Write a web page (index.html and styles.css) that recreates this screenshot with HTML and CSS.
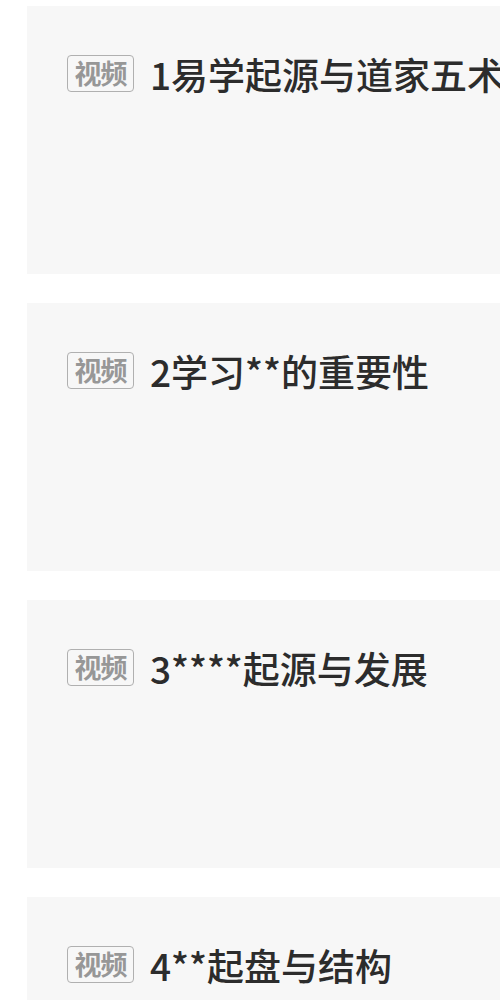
FILE: index.html
```html
<!DOCTYPE html>
<html lang="zh-CN">
<head>
<meta charset="utf-8">
<title>课程列表</title>
<link rel="stylesheet" href="styles.css">
</head>
<body>
<div class="list">
  <div class="card">
    <div class="head"><span class="badge">视频</span><span class="title">1易学起源与道家五术</span></div>
  </div>
  <div class="card">
    <div class="head"><span class="badge">视频</span><span class="title">2学习**的重要性</span></div>
  </div>
  <div class="card">
    <div class="head"><span class="badge">视频</span><span class="title">3****起源与发展</span></div>
  </div>
  <div class="card">
    <div class="head"><span class="badge">视频</span><span class="title">4**起盘与结构</span></div>
  </div>
</div>
</body>
</html>
```

FILE: styles.css
```css
html, body {
  margin: 0;
  padding: 0;
  background: #ffffff;
  overflow: hidden;
  width: 500px;
  height: 1000px;
}
.list {
  display: flex;
  flex-direction: column;
  gap: 29px;
  padding-top: 6px;
  padding-left: 27px;
  width: 560px;
}
.card {
  background: #f7f7f7;
  height: 268px;
  box-sizing: border-box;
  padding: 46px 0 0 40px;
}
.head {
  display: flex;
  align-items: center;
  gap: 16px;
  white-space: nowrap;
}
.badge {
  box-sizing: border-box;
  width: 67px;
  height: 37px;
  border: 1.5px solid #b0b0b0;
  border-radius: 4px;
  color: #979797;
  font-family: "Noto Sans CJK SC", sans-serif;
  font-weight: 700;
  font-size: 27px;
  line-height: 34px;
  text-align: center;
  letter-spacing: -1px;
}
.title {
  font-family: "Noto Sans CJK SC", sans-serif;
  font-weight: 500;
  font-size: 37px;
  line-height: 40px;
  color: #2c2c2c;
  margin-top: 2px;
}
```
